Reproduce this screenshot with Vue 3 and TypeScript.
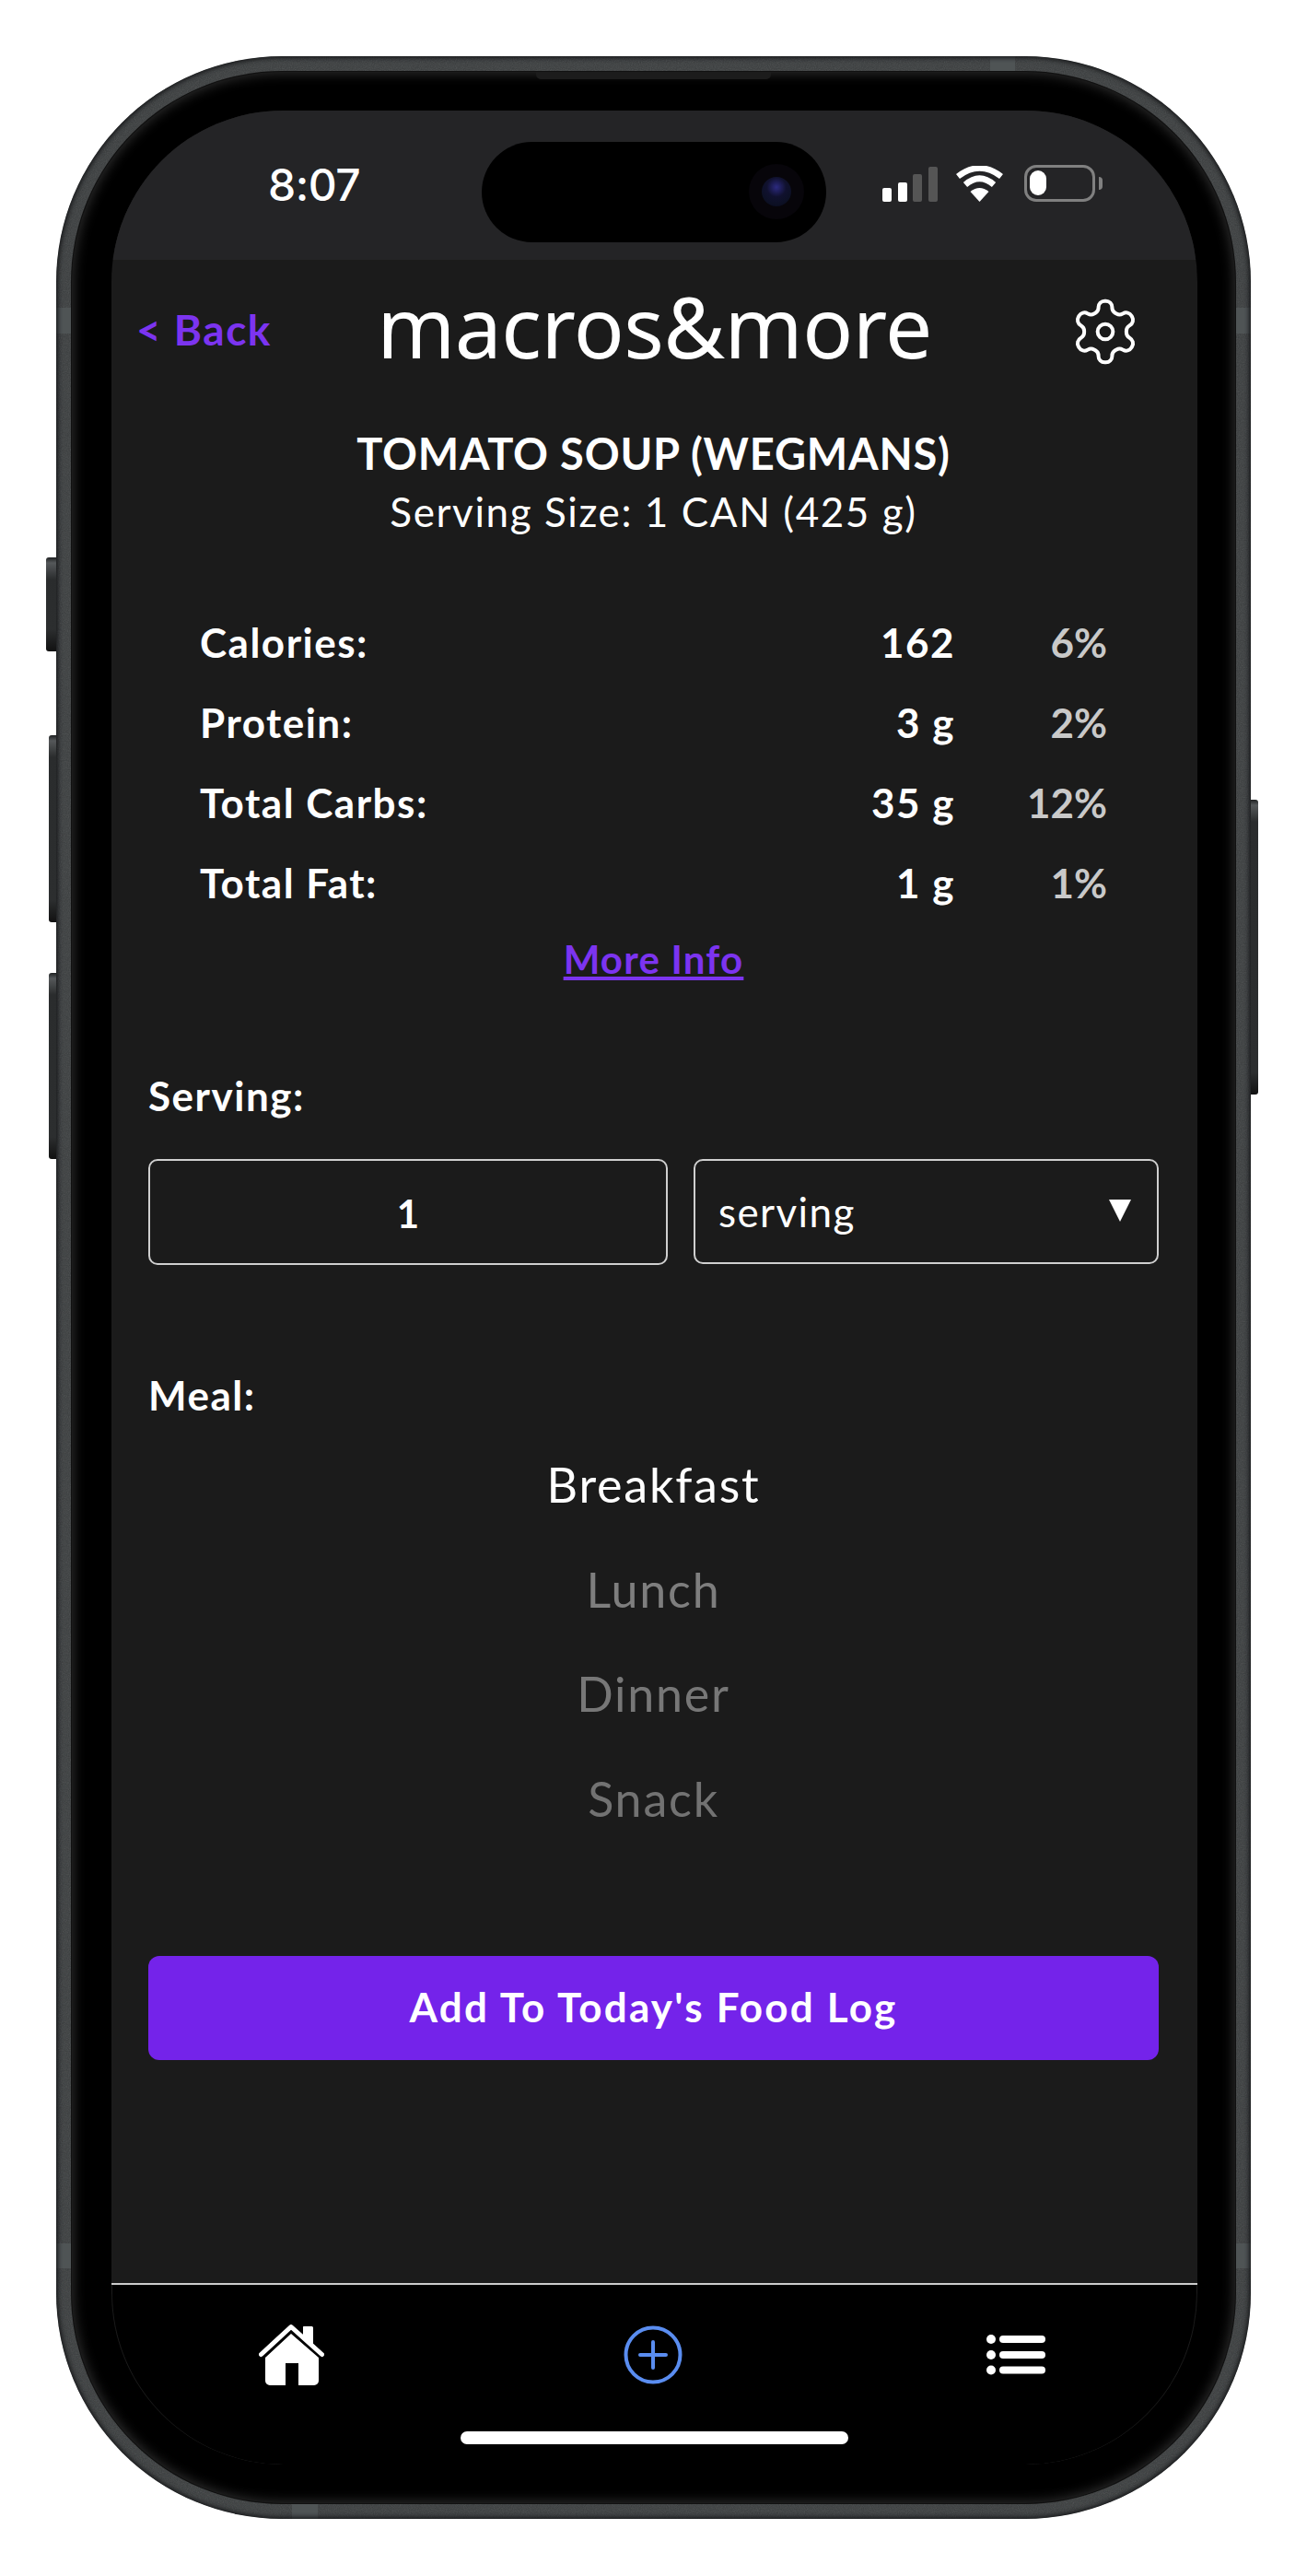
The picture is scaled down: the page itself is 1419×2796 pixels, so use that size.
<script setup lang="ts">
interface Row { label: string; value: string; pct: string }
const rows: Row[] = [
  { label: 'Calories:', value: '162', pct: '6%' },
  { label: 'Protein:', value: '3 g', pct: '2%' },
  { label: 'Total Carbs:', value: '35 g', pct: '12%' },
  { label: 'Total Fat:', value: '1 g', pct: '1%' },
]
const meals = [
  { name: 'Breakfast', color: '#ffffff' },
  { name: 'Lunch', color: '#7e7e7e' },
  { name: 'Dinner', color: '#777777' },
  { name: 'Snack', color: '#727272' },
]
</script>

<template>
  <div class="stage">
    <div class="phone">
      <i class="side s1"></i><i class="side s2"></i><i class="side s3"></i><i class="side s4"></i>
      <div class="frame">
        <svg class="noise" width="100%" height="100%" aria-hidden="true">
          <filter id="grain"><feTurbulence type="fractalNoise" baseFrequency="0.9" numOctaves="2" seed="4" /><feColorMatrix type="saturate" values="0" /></filter>
          <rect width="100%" height="100%" filter="url(#grain)" />
        </svg>
        <i class="band b-top"></i><i class="band b-left"></i><i class="band b-right"></i>
        <i class="band b-bottom"></i><i class="band b-left2"></i><i class="band b-right2"></i>
        <div class="bezel">
          <i class="speaker"></i>
          <div class="screen">
            <div class="status">
              <span class="time">8:07</span>
              <div class="island">
                <div class="cam"><i class="lens"></i></div>
              </div>
              <div class="indicators">
                <div class="signal"><i class="b1"></i><i class="b2"></i><i class="b3"></i><i class="b4"></i></div>
                <svg class="wifi" width="53" height="39" viewBox="0 0 53 39">
                  <path d="M26.5 39 L16.500 28 Q26.5 20 36.500 28 Z" fill="#fff" />
                  <path d="M11 20.500 Q26.5 7 42 20.500" fill="none" stroke="#fff" stroke-width="6.500" />
                  <path d="M3 11.500 Q26.5 -6.500 50 11.500" fill="none" stroke="#fff" stroke-width="6.500" />
                </svg>
                <div class="battery"><i class="level"></i></div>
                <i class="nub"></i>
              </div>
            </div>

            <main class="body">
              <header class="head">
                <a class="back">&lt; Back</a>
                <h1 class="brand">macros&amp;more</h1>
                <svg class="gear" width="80" height="80" viewBox="0 0 24 24" fill="none" stroke="#fff" stroke-width="1.2" stroke-linejoin="round">
                  <path d="M12.22 2h-.44a2 2 0 0 0-2 2v.18a2 2 0 0 1-1 1.73l-.43.25a2 2 0 0 1-2 0l-.15-.08a2 2 0 0 0-2.73.73l-.22.38a2 2 0 0 0 .73 2.73l.15.1a2 2 0 0 1 1 1.72v.51a2 2 0 0 1-1 1.74l-.15.09a2 2 0 0 0-.73 2.73l.22.38a2 2 0 0 0 2.73.73l.15-.08a2 2 0 0 1 2 0l.43.25a2 2 0 0 1 1 1.73V20a2 2 0 0 0 2 2h.44a2 2 0 0 0 2-2v-.18a2 2 0 0 1 1-1.73l.43-.25a2 2 0 0 1 2 0l.15.08a2 2 0 0 0 2.73-.73l.22-.39a2 2 0 0 0-.73-2.73l-.15-.08a2 2 0 0 1-1-1.74v-.5a2 2 0 0 1 1-1.74l.15-.09a2 2 0 0 0 .73-2.73l-.22-.38a2 2 0 0 0-2.73-.73l-.15.08a2 2 0 0 1-2 0l-.43-.25a2 2 0 0 1-1-1.73V4a2 2 0 0 0-2-2z" />
                  <circle cx="12" cy="12" r="2.5" />
                </svg>
              </header>

              <h2 class="food">TOMATO SOUP (WEGMANS)</h2>
              <p class="size">Serving Size: 1 CAN (425 g)</p>

              <div class="facts">
                <div v-for="r in rows" :key="r.label" class="fact">
                  <span class="f-label">{{ r.label }}</span>
                  <span class="f-value">{{ r.value }}</span>
                  <span class="f-pct">{{ r.pct }}</span>
                </div>
              </div>
              <a class="more">More Info</a>

              <div class="label serving-label">Serving:</div>
              <div class="inputs">
                <div class="field qty">1</div>
                <div class="field unit"><span>serving</span><i class="tri"></i></div>
              </div>

              <div class="label meal-label">Meal:</div>
              <div class="picker">
                <div v-for="m in meals" :key="m.name" class="meal" :style="{ color: m.color }">{{ m.name }}</div>
              </div>

              <button class="add">Add To Today's Food Log</button>
            </main>

            <nav class="tabs">
              <div class="icons">
                <svg class="i-home" width="71" height="68" viewBox="0 0 71 68">
                  <path d="M48.500 3h9a1.500 1.500 0 0 1 1.500 1.500V25L48 15V4.500A1.500 1.500 0 0 1 48.500 3Z" fill="#fff" />
                  <path d="M35 11 L65 37 V62 a5 5 0 0 1-5 5 H43 V43 H29 V67 H12 a5 5 0 0 1-5-5 V37 Z" fill="#fff" />
                  <path d="M2.500 33.500 L35 3.500 L68.500 33.500" fill="none" stroke="#fff" stroke-width="5" stroke-linecap="round" stroke-linejoin="round" />
                </svg>
                <svg class="i-add" width="64" height="64" viewBox="0 0 64 64" fill="none" stroke="#5a8df0">
                  <circle cx="32" cy="32" r="29.500" stroke-width="4" />
                  <path d="M32 18V46M18 32H46" stroke-width="4" stroke-linecap="round" />
                </svg>
                <svg class="i-list" width="64" height="44" viewBox="0 0 64 44" fill="#fff">
                  <circle cx="5" cy="5" r="5" /><circle cx="5" cy="22" r="5" /><circle cx="5" cy="38.500" r="5" />
                  <rect x="14" y="1" width="50" height="8" rx="4" /><rect x="14" y="18" width="50" height="8" rx="4" /><rect x="14" y="34.500" width="50" height="8" rx="4" />
                </svg>
              </div>
              <div class="home-bar"></div>
            </nav>
          </div>
        </div>
      </div>
    </div>
  </div>
</template>

<style>
html, body { background: #fff; margin: 0; }
</style>

<style scoped>
* { box-sizing: border-box; }
i { display: block; }
.stage { width: 1419px; height: 2796px; padding: 61px; background: #fff; font-family: Lato, "Noto Sans", sans-serif; color: #fff; overflow: hidden; }
.phone { position: relative; width: 1297px; height: 2673px; }
.side { position: absolute; background: linear-gradient(180deg, #1f2122 0, #55585a 6px, #2a2c2d 24px, #2c2e2f calc(100% - 24px), #111 100%); }
.s1 { left: -11px; top: 544px; width: 11px; height: 102px; border-radius: 3px 0 0 3px; }
.s2 { left: -8px; top: 737px; width: 8px; height: 203px; border-radius: 3px 0 0 3px; }
.s3 { left: -8px; top: 995px; width: 8px; height: 202px; border-radius: 3px 0 0 3px; }
.s4 { right: -8px; top: 807px; width: 8px; height: 320px; border-radius: 0 3px 3px 0; }

.frame { position: relative; width: 100%; height: 100%; padding: 17px; border-radius: 245px; background: #3a3d3e; overflow: hidden; }
.frame::after { content: ""; position: absolute; inset: 0; border-radius: 245px; box-shadow: inset 0 0 5px 2px #17181a; pointer-events: none; }
.noise { position: absolute; inset: 0; opacity: .16; }
.band { position: absolute; background: #4f5455; }
.b-top { left: 1014px; top: 0; width: 27px; height: 17px; }
.b-left { left: 0; top: 273px; width: 17px; height: 28px; }
.b-right { right: 0; top: 273px; width: 17px; height: 28px; }
.b-bottom { left: 256px; bottom: 0; width: 28px; height: 17px; }
.b-left2 { left: 0; top: 2374px; width: 17px; height: 27px; }
.b-right2 { right: 0; top: 2374px; width: 17px; height: 27px; }

.bezel { position: relative; z-index: 1; width: 100%; height: 100%; padding: 42px 41px 42px 43px; border-radius: 228px; background: #000; box-shadow: 0 0 0 1px #111, inset 0 0 14px 1px #333; }
.speaker { position: absolute; left: 504px; top: 0; width: 255px; height: 8px; background: #1c1c1c; border-radius: 0 0 5px 5px; }
.screen { display: flex; flex-direction: column; height: 100%; border-radius: 186px; overflow: hidden; background: #1b1b1b; }

.status { position: relative; flex: none; height: 162px; background: #242426; }
.time { position: absolute; left: 170px; top: 52px; font: 500 48px/58px Inter, sans-serif; letter-spacing: -.5px; }
.island { position: absolute; left: 402px; top: 34px; width: 374px; height: 109px; border-radius: 55px; background: #000; }
.cam { position: absolute; left: 290px; top: 24px; width: 60px; height: 60px; border-radius: 50%; background: #07050a; display: flex; align-items: center; justify-content: center; }
.lens { width: 32px; height: 32px; border-radius: 50%; background: radial-gradient(circle at 50% 35%, #2c2a80 0, #10112e 40%, #0c1024 70%, #08081a 100%); }
.indicators { position: absolute; left: 837px; top: 59px; width: 240px; height: 40px; display: flex; align-items: flex-end; }
.signal { display: flex; align-items: flex-end; gap: 6.500px; width: 59px; height: 39px; }
.signal i { width: 10px; border-radius: 2px; flex: none; }
.b1 { height: 15px; background: #fff; }
.b2 { height: 21px; background: #fff; }
.b3 { height: 30px; background: #555; }
.b4 { height: 38px; background: #555; }
.wifi { margin-left: 20px; flex: none; }
.battery { margin-left: 22px; flex: none; width: 77px; height: 40px; border: 3px solid #808080; border-radius: 13px; padding: 3px; }
.level { width: 18px; height: 27px; border-radius: 9px; background: #fff; }
.nub { flex: none; width: 4px; height: 14px; margin: 0 0 13px 4px; background: #808080; border-radius: 0 4px 4px 0; }

.body { flex: 1; padding: 0 42px 0 40px; min-height: 0; }
.head { height: 156px; margin: 0 -42px 0 -40px; padding: 0 27px; display: grid; grid-template-columns: 1fr auto 1fr; align-items: center; }
.back { font-size: 46px; font-weight: 700; color: #7c34f0; letter-spacing: 1.5px; margin-bottom: 6px; }
.brand { margin: 0 0 12px; font: 400 91px/1 "Noto Sans", sans-serif; letter-spacing: -.5px; }
.gear { justify-self: end; margin-right: 33px; }
.food { margin: 26px 0 0; text-align: center; font-size: 47px; line-height: 56px; font-weight: 700; letter-spacing: .8px; }
.size { margin: 7px 0 0; text-align: center; font-size: 44px; line-height: 56px; font-weight: 400; letter-spacing: 1.6px; }
.facts { margin: 71px 0 0; }
.fact { display: grid; grid-template-columns: 1fr auto 165px; height: 87px; line-height: 87px; font-size: 44px; font-weight: 700; letter-spacing: 1.5px; padding: 0 56px 0 56px; }
.f-label, .f-value { color: #fff; }
.f-pct { text-align: right; color: #c9c9c9; letter-spacing: 0; }
.more { display: block; margin-top: 11px; text-align: center; font-size: 42px; line-height: 56px; font-weight: 700; letter-spacing: 1.2px; color: #7c34f0; text-decoration: underline; }
.label { font-size: 44px; line-height: 56px; font-weight: 700; letter-spacing: 1.5px; }
.serving-label { margin-top: 92px; }
.inputs { margin-top: 41px; display: grid; grid-template-columns: 564px 505px; justify-content: space-between; }
.field { height: 115px; border: 2px solid #cfcfcf; border-radius: 10px; font-size: 42px; font-weight: 700; display: flex; align-items: center; }
.qty { justify-content: center; padding-top: 2px; }
.unit { height: 114px; justify-content: space-between; padding: 0 28px 0 25px; font-size: 44px; font-weight: 400; letter-spacing: 1.4px; }
.tri { width: 0; height: 0; border-left: 12px solid transparent; border-right: 12px solid transparent; border-top: 24px solid #fff; margin-top: -2px; }
.meal-label { margin-top: 113px; }
.picker { margin-top: 13px; }
.meal { height: 113.500px; line-height: 113.500px; text-align: center; font-size: 52px; letter-spacing: 1.8px; }
.add { display: block; width: 100%; height: 113px; margin-top: 114px; padding: 0 0 3px; border: 0; border-radius: 12px; background: #7423ea; color: #fff; font: 700 44px Lato, sans-serif; letter-spacing: 2.2px; }

.tabs { flex: none; height: 197px; background: #000; border-top: 2px solid #ccc; border-radius: 0 0 186px 186px; box-shadow: inset 1px 0 0 #1c1c1c, inset -1px 0 0 #1c1c1c; }
.icons { height: 144px; padding: 8px 0 0 160px; display: flex; align-items: center; }
.icons svg { flex: none; }
.i-add { margin-left: 325px; }
.i-list { margin-left: 330px; }
.home-bar { width: 421px; height: 14px; margin: 15px auto 0; border-radius: 7px; background: #fff; }
</style>
